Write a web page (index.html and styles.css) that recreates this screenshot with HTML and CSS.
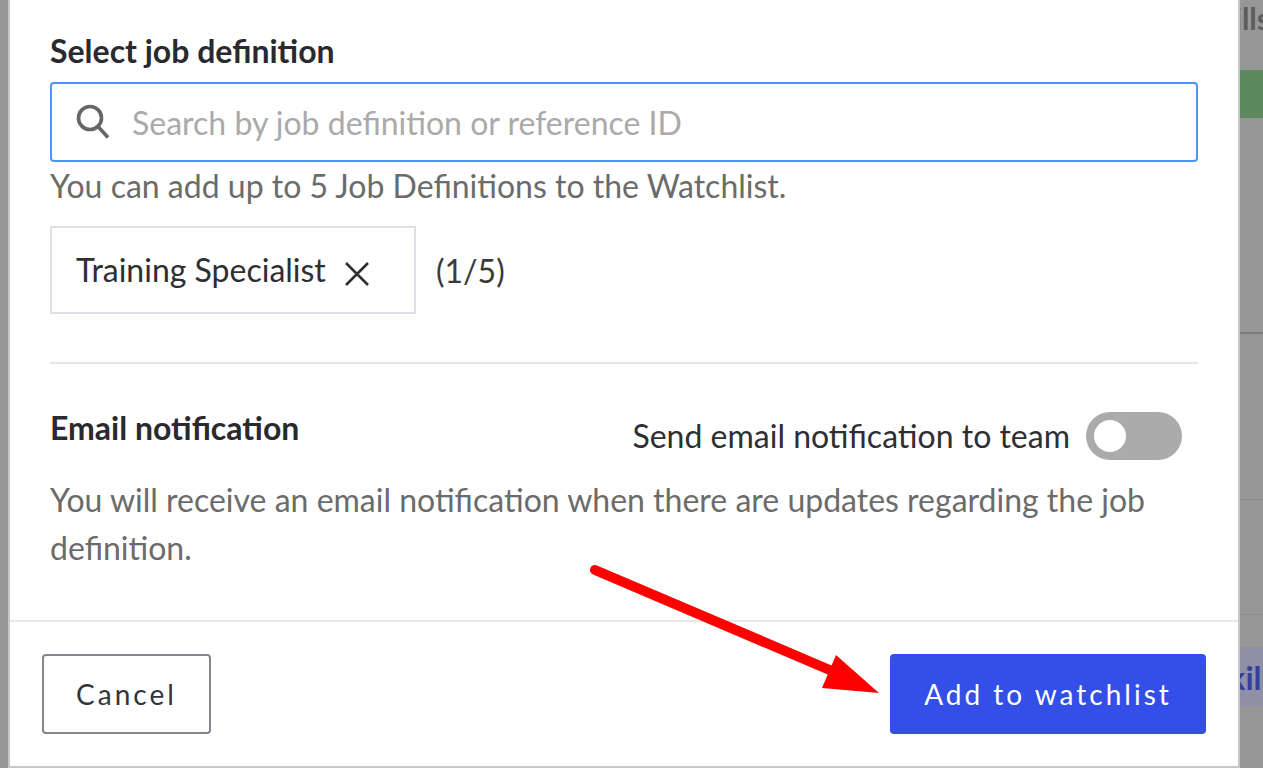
FILE: index.html
```html
<!DOCTYPE html>
<html lang="en">
<head>
    <meta charset="UTF-8">
    <meta name="viewport" content="width=device-width, initial-scale=1.0">
    <title>Add to watchlist</title>
    <link rel="stylesheet" href="styles.css">
</head>
<body>
    <div class="backdrop">
        <div class="bg-title">Skills</div>
        <div class="bg-green"></div>
        <div class="bg-row bg-row-dark"></div>
        <div class="bg-row bg-row-mid"></div>
        <div class="bg-row bg-row-low"></div>
        <div class="bg-skill">Skills</div>
    </div>

    <div class="modal">
        <div class="modal-body">
            <h2 class="section-title">Select job definition</h2>
            <div class="search-box">
                <svg class="search-icon" width="34" height="36" viewBox="0 0 34 36" fill="none" stroke="#666" stroke-width="3.6">
                    <circle cx="14" cy="14" r="11.5"/>
                    <path d="M22 22.5 L32 33.5"/>
                </svg>
                <span class="search-placeholder">Search by job definition or reference ID</span>
            </div>
            <div class="hint">You can add up to 5 Job Definitions to the Watchlist.</div>
            <div class="chip-row">
                <div class="chip">
                    <span>Training Specialist</span>
                    <svg class="chip-close" width="24" height="24" viewBox="0 0 24 24" stroke="#2e2e33" stroke-width="2.6" fill="none">
                        <path d="M1 1 L23 23 M23 1 L1 23"/>
                    </svg>
                </div>
                <span class="chip-count">(1/5)</span>
            </div>
            <hr class="divider">
            <div class="email-head">
                <h2 class="section-title">Email notification</h2>
                <div class="toggle-wrap">
                    <span class="toggle-label">Send email notification to team</span>
                    <div class="toggle"><div class="toggle-knob"></div></div>
                </div>
            </div>
            <p class="email-text">You will receive an email notification when there are updates regarding the job definition.</p>
        </div>
        <div class="modal-footer">
            <button class="btn btn-cancel">Cancel</button>
            <button class="btn btn-add">Add to watchlist</button>
        </div>
    </div>

    <!-- red annotation arrow -->
    <svg class="arrow" width="1263" height="768" viewBox="0 0 1263 768">
        <path d="M595 570 L832 671" stroke="#ff0000" stroke-width="10" stroke-linecap="round" fill="none"/>
        <polygon points="836,655 879,693 822,688" fill="#ff0000"/>
    </svg>
</body>
</html>
```

FILE: styles.css
```css
html, body {
    margin: 0;
    padding: 0;
    height: 100%;
    overflow: hidden;
}
body {
    font-family: Lato, "Open Sans", sans-serif;
    background-color: #979797;
    position: relative;
}

/* page behind the dialog, only the right edge shows */
.backdrop {
    height: 768px;
    margin-left: 1000px;
    display: flex;
    flex-direction: column;
    overflow: hidden;
}
.bg-title {
    height: 70px;
    font-size: 30px;
    font-weight: 700;
    color: #5c5c5c;
    padding-left: 202px;
    white-space: nowrap;
    line-height: 36px;
}
.bg-green {
    height: 48px;
    background-color: #5c8a5e;
    flex-shrink: 0;
}
.bg-row {
    border-bottom: 1px solid #858585;
    flex-shrink: 0;
}
.bg-row-dark { height: 214px; border-bottom: 2px solid #7f7f7f; }
.bg-row-mid { height: 165px; border-bottom-color: #8b8b8b; }
.bg-row-low { height: 114px; border-bottom-color: #8b8b8b; }
.bg-skill {
    margin-top: 32px;
    height: 59px;
    flex-shrink: 0;
    line-height: 62px;
    background-color: #8f90a6;
    font-size: 32px;
    font-weight: 700;
    color: #343f9e;
    padding-left: 211px;
    white-space: nowrap;
    overflow: hidden;
}

.modal {
    position: absolute;
    left: 8px;
    top: 0;
    width: 1228px;
    height: 766px;
    background-color: #fff;
    border: 2px solid #c8c8c8;
    border-top: none;
    display: flex;
    flex-direction: column;
}
.modal-body {
    flex: 1;
    padding: 32px 40px 0 40px;
}
.section-title {
    margin: 0;
    font-size: 32px;
    line-height: 38px;
    font-weight: 700;
    color: #2a2a2e;
}
.search-box {
    margin-top: 12px;
    height: 76px;
    border: 2px solid #4c94f5;
    border-radius: 4px;
    display: flex;
    align-items: center;
    padding-left: 24px;
    gap: 22px;
}
.search-placeholder {
    font-size: 32px;
    color: #aaaaaa;
}
.hint {
    margin-top: 4px;
    font-size: 32px;
    line-height: 40px;
    color: #6b6b6b;
}
.chip-row {
    margin-top: 20px;
    display: flex;
    align-items: center;
    gap: 20px;
}
.chip {
    width: 362px;
    height: 84px;
    border: 2px solid #dfdfe6;
    display: flex;
    align-items: center;
    font-size: 32px;
    color: #2e2e33;
}
.chip span {
    margin-left: 24px;
    margin-right: 19px;
    margin-bottom: 2px;
}
.chip-close {
    margin-top: 8px;
}
.chip-count {
    font-size: 32px;
    color: #3a3a3a;
}
.divider {
    margin: 48px 0 0 0;
    border: none;
    border-top: 2px solid #e6e6e6;
}
.email-head {
    margin-top: 45px;
    display: flex;
    justify-content: space-between;
    align-items: flex-start;
    padding-right: 16px;
}
.toggle-wrap {
    display: flex;
    align-items: center;
    gap: 16px;
    font-size: 32px;
    color: #2e2e33;
    margin-top: 3px;
}
.toggle-label {
    padding-bottom: 2px;
}
.toggle {
    width: 96px;
    height: 48px;
    border-radius: 24px;
    background-color: #ababab;
    display: flex;
    align-items: center;
    padding-left: 8px;
    box-sizing: border-box;
}
.toggle-knob {
    width: 32px;
    height: 32px;
    border-radius: 50%;
    background-color: #fff;
}
.email-text {
    margin: 16px 0 0 0;
    font-size: 32px;
    line-height: 48px;
    color: #6b6b6b;
}
.modal-footer {
    height: 146px;
    border-top: 2px solid #e8e8e8;
    display: flex;
    justify-content: space-between;
    align-items: center;
    padding: 0 32px;
    box-sizing: border-box;
}
.btn {
    height: 80px;
    font-family: Lato, "Open Sans", sans-serif;
    font-size: 28px;
    letter-spacing: 3px;
    border-radius: 4px;
    cursor: pointer;
}
.btn-cancel {
    width: 169px;
    background-color: #fff;
    border: 2px solid #85858f;
    color: #33333a;
}
.btn-add {
    width: 316px;
    background-color: #344ee8;
    border: none;
    color: #fff;
}

.arrow {
    position: absolute;
    left: 0;
    top: 0;
    pointer-events: none;
}
```
